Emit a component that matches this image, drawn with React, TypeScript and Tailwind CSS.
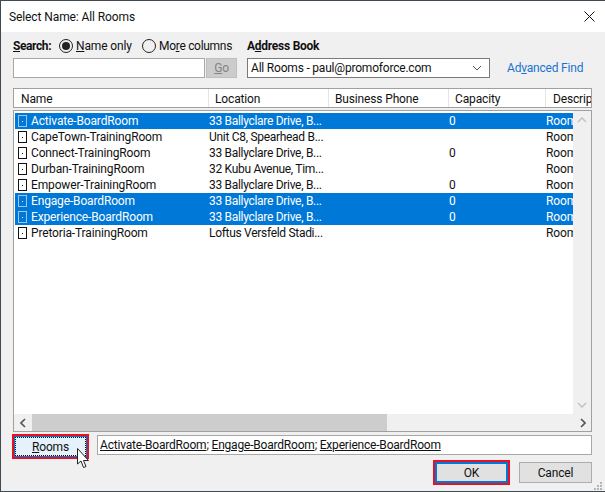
import React from "react";

const rows = [
  { n: "Activate-BoardRoom", l: "33 Ballyclare Drive, B...", c: "0", s: true },
  { n: "CapeTown-TrainingRoom", l: "Unit C8, Spearhead B...", c: "", s: false },
  { n: "Connect-TrainingRoom", l: "33 Ballyclare Drive, B...", c: "0", s: false },
  { n: "Durban-TrainingRoom", l: "32 Kubu Avenue, Tim...", c: "", s: false },
  { n: "Empower-TrainingRoom", l: "33 Ballyclare Drive, B...", c: "0", s: false },
  { n: "Engage-BoardRoom", l: "33 Ballyclare Drive, B...", c: "0", s: true },
  { n: "Experience-BoardRoom", l: "33 Ballyclare Drive, B...", c: "0", s: true },
  { n: "Pretoria-TrainingRoom", l: "Loftus Versfeld Stadi...", c: "", s: false },
];

function RoomIcon({ selected }: { selected: boolean }) {
  return (
    <svg width="9" height="12" viewBox="0 0 9 12" className="shrink-0">
      <rect x="0.5" y="0.5" width="8" height="11" fill="none" stroke={selected ? "#9cc6ec" : "#111"} />
      <rect x="4" y="6" width="1" height="1" fill={selected ? "#d5e6f7" : "#111"} />
    </svg>
  );
}

function Head({ w, children, last }: { w: string; children: React.ReactNode; last?: boolean }) {
  return (
    <div className={`${w} h-full flex items-center pt-px overflow-hidden whitespace-nowrap shrink-0 ${last ? "pl-[7px]" : "pl-[6px] border-r border-[#e5e5e5]"}`}>
      {children}
    </div>
  );
}

export default function App() {
  return (
    <div
      className="w-[605px] h-[492px] bg-[#3f4a55] overflow-hidden text-[12px] leading-[16px] text-[#111] tracking-[-0.15px] relative"
      style={{ fontFamily: 'Roboto, "Open Sans", sans-serif' }}
    >
      <div className="w-[604px] h-[490px] ml-px mt-px bg-[#f0f0f0] flex flex-col">
        {/* title bar */}
        <div className="h-[31px] bg-white flex items-center justify-between pl-[8px] pr-[10px] shrink-0">
          <span className="tracking-[-0.1px]">Select Name: All Rooms</span>
          <svg width="11" height="11" viewBox="0 0 11 11">
            <path d="M0.5 0.5L10.5 10.5M10.5 0.5L0.5 10.5" stroke="#111" strokeWidth="1" fill="none" />
          </svg>
        </div>

        {/* search labels */}
        <div className="h-[26px] flex items-end pb-[4px] pl-[12px] shrink-0">
          <span className="font-bold w-[46px] tracking-[-0.4px]"><u>S</u>earch:</span>
          <span className="w-[14px] h-[14px] rounded-full border border-[#222] flex items-center justify-center mb-px">
            <span className="w-[8px] h-[8px] rounded-full bg-[#222]" />
          </span>
          <span className="ml-[3px] w-[63px] whitespace-nowrap"><u>N</u>ame only</span>
          <span className="w-[14px] h-[14px] rounded-full border border-[#222] mb-px ml-[3px]" />
          <span className="ml-[3px] w-[88px] whitespace-nowrap tracking-[-0.3px]">Mo<u>r</u>e columns</span>
          <span className="font-bold whitespace-nowrap tracking-[-0.25px]">A<u>d</u>dress Book</span>
        </div>

        {/* search inputs */}
        <div className="h-[20px] flex pl-[12px] shrink-0">
          <div className="w-[192px] h-[20px] bg-white border border-[#a8a8a8]" />
          <div className="w-[31px] h-[20px] ml-px bg-[#cccccc] border border-[#bfbfbf] flex items-center justify-center text-[#838383]">
            <span><u>G</u>o</span>
          </div>
          <div className="w-[243px] h-[20px] ml-[10px] bg-white border border-[#7a7a7a] flex items-center justify-between pl-[3px] pr-[7px] whitespace-nowrap tracking-[-0.2px]">
            <span>All Rooms - paul@promoforce.com</span>
            <svg width="10" height="6" viewBox="0 0 10 6"><path d="M1 1L5 5L9 1" stroke="#555" fill="none" /></svg>
          </div>
          <span className="ml-[17px] text-[#1a73d0] whitespace-nowrap leading-[20px] tracking-[-0.2px]">Ad<u>v</u>anced Find</span>
        </div>

        {/* header */}
        <div className="mt-[10px] ml-[12px] w-[579px] h-[20px] bg-white border border-[#a0a0a0] flex shrink-0">
          <Head w="w-[195px]"><span className="ml-px">Name</span></Head>
          <Head w="w-[120px]"><span>Location</span></Head>
          <Head w="w-[120px]"><span>Business Phone</span></Head>
          <Head w="w-[97px]"><span>Capacity</span></Head>
          <Head w="flex-1" last><span>Descrip</span></Head>
        </div>

        {/* list */}
        <div className="mt-[2px] ml-[12px] w-[579px] h-[322px] border border-[#a0a0a0] flex flex-col shrink-0">
          <div className="flex-1 flex min-h-0">
            <div className="flex-1 bg-white pt-[2px] pl-px overflow-hidden">
              {rows.map((r) => (
                <div key={r.n} className={`h-[16px] flex items-center whitespace-nowrap ${r.s ? "bg-[#0078d7] text-white" : ""}`}>
                  <div className="w-[194px] flex items-center pl-[3px] shrink-0">
                    <RoomIcon selected={r.s} />
                    <span className="ml-[4px]">{r.n}</span>
                  </div>
                  <div className="w-[120px] shrink-0 tracking-[-0.3px]">{r.l}</div>
                  <div className="w-[120px] shrink-0" />
                  <div className="w-[97px] shrink-0">{r.c}</div>
                  <div className="flex-1 min-w-0">Room</div>
                </div>
              ))}
            </div>
            {/* vertical scrollbar */}
            <div className="w-[18px] bg-[#f0f0f0] flex flex-col items-center justify-between py-[6px] shrink-0">
              <svg width="10" height="6" viewBox="0 0 10 6"><path d="M1 5L5 1L9 5" stroke="#c4c4c4" strokeWidth="1.6" fill="none" /></svg>
              <svg width="10" height="6" viewBox="0 0 10 6"><path d="M1 1L5 5L9 1" stroke="#c4c4c4" strokeWidth="1.6" fill="none" /></svg>
            </div>
          </div>
          {/* horizontal scrollbar */}
          <div className="h-[17px] flex bg-[#f0f0f0] shrink-0 items-stretch">
            <div className="w-[18px] flex items-center justify-center">
              <svg width="6" height="10" viewBox="0 0 6 10"><path d="M5 1L1 5L5 9" stroke="#555" strokeWidth="1.6" fill="none" /></svg>
            </div>
            <div className="w-[355px] bg-[#cdcdcd]" />
            <div className="flex-1 flex items-center justify-end pr-[5px]">
              <svg width="6" height="10" viewBox="0 0 6 10"><path d="M1 1L5 5L1 9" stroke="#555" strokeWidth="1.6" fill="none" /></svg>
            </div>
          </div>
        </div>

        {/* recipients row */}
        <div className="flex mt-[2px] ml-[11px] shrink-0 h-[25px]">
          <div className="w-[77px] h-[25px] border-[2px] border-[#e81123] bg-[#e5f1fb]">
            <div className="w-full h-full border border-[#0078d7]">
              <div className="w-full h-full border border-dotted border-[#111] flex items-center justify-center">
                <span><u>R</u>ooms</span>
              </div>
            </div>
          </div>
          <div className="ml-[8px] w-[495px] h-[20px] mt-px bg-white border border-[#a8a8a8] flex items-center pl-[2px] whitespace-nowrap tracking-[-0.2px]">
            <span><u>Activate-BoardRoom</u>; <u>Engage-BoardRoom</u>; <u>Experience-BoardRoom</u></span>
          </div>
        </div>

        {/* buttons */}
        <div className="flex justify-end pr-[13px] shrink-0 items-center mt-px h-[25px]">
          <div className="w-[77px] h-[25px] border-[2px] border-[#e81123]">
            <div className="w-full h-full border-[2px] border-[#0078d7] bg-[#e1e1e1] flex items-center justify-center">OK</div>
          </div>
          <div className="ml-[9px] w-[73px] h-[21px] bg-[#e1e1e1] border border-[#adadad] flex items-center justify-center">Cancel</div>
        </div>
      </div>

      {/* resize grip */}
      <svg className="absolute left-[594px] top-[482px]" width="9" height="9" viewBox="0 0 9 9" fill="#b5b5b5">
        <rect x="6" y="0" width="2" height="2" />
        <rect x="3" y="3" width="2" height="2" />
        <rect x="6" y="3" width="2" height="2" />
        <rect x="0" y="6" width="2" height="2" />
        <rect x="3" y="6" width="2" height="2" />
        <rect x="6" y="6" width="2" height="2" />
      </svg>

      {/* mouse cursor */}
      <svg className="absolute left-[77px] top-[448px]" width="13" height="21" viewBox="0 0 13 21">
        <path d="M0.5 0.5V16L4 13L6.5 19.5L9 18.5L6.5 12.5H11.5Z" fill="#fff" stroke="#222" strokeWidth="1" />
      </svg>
    </div>
  );
}
